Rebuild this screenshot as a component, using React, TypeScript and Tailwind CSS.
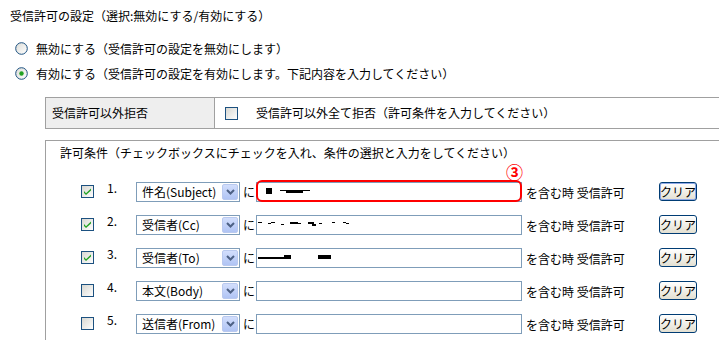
import React from 'react';

type Rule = {
  no: number;
  field: string;
  checked: boolean;
  marks: number[][];
};

// redaction marks inside the value boxes: [x, y, w, h]
const rules: Rule[] = [
  { no: 1, field: '件名(Subject)', checked: true, marks: [[9, 5, 6, 6], [23, 7, 6, 1], [29, 7, 17, 3], [46, 7, 7, 1]] },
  {
    no: 2,
    field: '受信者(Cc)',
    checked: true,
    marks: [[1, 6, 4, 1], [11, 7, 3, 1], [14, 6, 4, 1], [24, 8, 3, 1], [33, 6, 8, 2], [41, 7, 3, 1], [51, 6, 6, 2], [55, 8, 4, 2], [62, 7, 3, 1], [75, 6, 3, 1], [86, 6, 3, 1], [89, 7, 3, 1]],
  },
  { no: 3, field: '受信者(To)', checked: true, marks: [[1, 8, 28, 2], [27, 6, 7, 4], [61, 6, 13, 4]] },
  { no: 4, field: '本文(Body)', checked: false, marks: [] },
  { no: 5, field: '送信者(From)', checked: false, marks: [] },
];

const Radio: React.FC<{ checked?: boolean }> = ({ checked }) => (
  <svg width="13" height="13" viewBox="0 0 13 13">
    <defs>
      <linearGradient id={checked ? 'rg1' : 'rg0'} x1="0" y1="0" x2="1" y2="1">
        <stop offset="0" stopColor="#dcdcd7" />
        <stop offset="1" stopColor="#ffffff" />
      </linearGradient>
    </defs>
    <circle cx="6.5" cy="6.5" r="5.8" fill={`url(#${checked ? 'rg1' : 'rg0'})`} stroke="#1c5180" strokeWidth="1" />
    {checked && <circle cx="6.5" cy="6.5" r="2.2" fill="#21a121" />}
  </svg>
);

const Check: React.FC<{ checked?: boolean }> = ({ checked }) => (
  <svg width="13" height="13" viewBox="0 0 13 13">
    <defs>
      <linearGradient id="cbg" x1="0" y1="0" x2="1" y2="1">
        <stop offset="0" stopColor="#d6d6d0" />
        <stop offset="1" stopColor="#ffffff" />
      </linearGradient>
    </defs>
    <rect x="0.5" y="0.5" width="12" height="12" fill="url(#cbg)" stroke="#1c5180" />
    {checked && <path d="M3 6 L5 8.2 L10 3.6 L10 5.4 L5 10 L3 8 Z" fill="#21a121" />}
  </svg>
);

const App: React.FC = () => {
  return (
    <div
      className="relative w-[719px] h-[342px] overflow-hidden bg-white text-[12px] leading-4 text-black"
      style={{ fontFamily: '"Noto Sans CJK JP", "Noto Sans", sans-serif' }}
    >
      <div className="pt-[8px] pl-[10px]">受信許可の設定（選択:無効にする/有効にする）</div>

      <div className="mt-[12px] pl-[15px]">
        <div className="flex items-center h-[25px] gap-[8px]">
          <Radio />
          <span>無効にする（受信許可の設定を無効にします）</span>
        </div>
        <div className="flex items-center h-[25px] gap-[8px]">
          <Radio checked />
          <span>有効にする（受信許可の設定を有効にします。下記内容を入力してください）</span>
        </div>
      </div>

      <div className="ml-[45px] mt-[11px] w-[700px] h-[32px] flex border-y border-l border-[#a0a0a0]">
        <div className="w-[169px] bg-[#eeeeee] border-r border-[#a0a0a0] flex items-center pl-[6px]">受信許可以外拒否</div>
        <div className="flex items-center pl-[10px] gap-[18px]">
          <Check />
          <span>受信許可以外全て拒否（許可条件を入力してください）</span>
        </div>
      </div>

      <div className="ml-[45px] mt-[11px] w-[700px] border-t border-l border-[#a0a0a0]">
        <div className="h-[34px] pt-[4px] pl-[14px]">許可条件（チェックボックスにチェックを入れ、条件の選択と入力をしてください）</div>
        {rules.map((r) => (
          <div key={r.no} className="flex items-center h-[33px] pl-[35px]">
            <div className="w-[13px] h-[13px] flex">
              <Check checked={r.checked} />
            </div>
            <div className="w-[42px] pl-[13px] mb-[8px]">{r.no}.</div>
            <div className="w-[104px] h-[20px] border border-[#7f9db9] bg-white flex items-center justify-between pl-[5px] pr-[1px]">
              <span>{r.field}</span>
              <div className="w-[16px] h-[16px] rounded-[2px] border border-[#b9c9ef] bg-gradient-to-b from-[#d2defc] to-[#b0c4f4] flex items-center justify-center">
                <svg width="9" height="6" viewBox="0 0 9 6">
                  <path d="M1 1 L4.5 4.5 L8 1" fill="none" stroke="#4d6185" strokeWidth="2" />
                </svg>
              </div>
            </div>
            <div className="w-[16px] pl-[3px]">に</div>
            <div className="relative w-[266px] h-[20px] border border-[#7f9db9] bg-white">
              <svg width="120" height="18" className="block">
                {r.marks.map((m, i) => (
                  <rect key={i} x={m[0]} y={m[1]} width={m[2]} height={m[3]} fill="#000" />
                ))}
              </svg>
              {r.no === 1 && (
                <>
                  <div className="absolute -left-[1px] -top-[3px] w-[266px] h-[22px] border-2 border-[#ff0000] rounded-[6px]" />
                  <span className="absolute left-[249px] -top-[20px] text-[17px] leading-[18px] font-bold text-[#ff0000]">③</span>
                </>
              )}
            </div>
            <div className="w-[137px] pl-[4px] pt-[3px]">を含む時 受信許可</div>
            <button
              className={`w-[38px] h-[19px] rounded-[3px] border border-[#003c74] bg-gradient-to-b from-white to-[#e3e0d2] text-[12px] leading-none flex items-center justify-center ${
                r.no === 1 ? 'shadow-[inset_0_0_0_1px_#8fa8e8]' : ''
              }`}
            >
              クリア
            </button>
          </div>
        ))}
      </div>
    </div>
  );
};

export default App;
